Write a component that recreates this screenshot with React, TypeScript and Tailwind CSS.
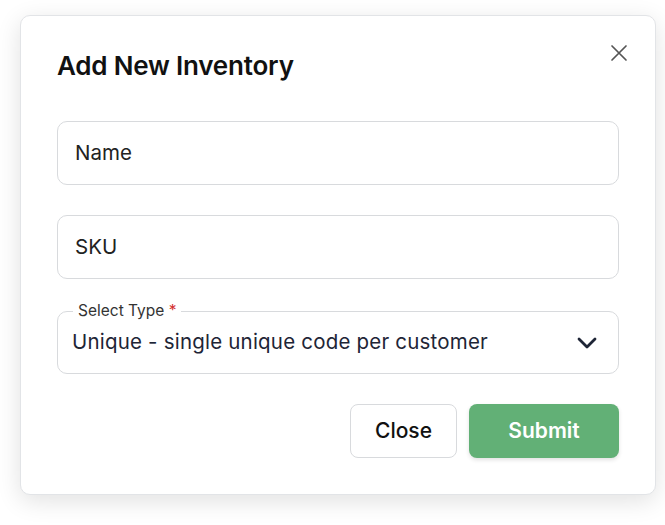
export default function App() {
  return (
    <div className="h-[525px] w-[665px] bg-white pl-5 pr-[10px] pt-[15px] font-['Inter',sans-serif]">
      {/* Modal card */}
      <div className="relative h-[480px] w-[636px] rounded-[10px] border border-[#e2e4e7] bg-white px-9 pt-[33px] shadow-[0_6px_24px_rgba(0,0,0,0.12)]">
        <button className="absolute right-[27px] top-[28px] text-[#555]">
          <svg width="18" height="18" viewBox="0 0 18 18" fill="none" stroke="currentColor" strokeWidth="1.7" strokeLinecap="round">
            <path d="M2 2L16 16M16 2L2 16" />
          </svg>
        </button>

        <h2 className="text-[26px] font-semibold leading-[34px] tracking-[-0.2px] text-[#111]">
          Add New Inventory
        </h2>

        <div className="mt-[38px] flex flex-col">
          <div className="flex h-[64px] items-center rounded-[10px] border border-[#d8dadd] px-[17px] text-[20.5px] text-[#222]">
            Name
          </div>
          <div className="mt-[30px] flex h-[64px] items-center rounded-[10px] border border-[#d8dadd] px-[17px] text-[20.5px] text-[#222]">
            SKU
          </div>

          {/* Select with floating label */}
          <div className="relative mt-[32px] flex h-[63px] items-center justify-between rounded-[10px] border border-[#d8dadd] pl-[14px] pr-[21px]">
            <span className="absolute left-[15px] top-[-11px] bg-white px-[5px] text-[15.5px] leading-[20px] text-[#333]">
              Select Type <span className="text-[#d32f2f]">*</span>
            </span>
            <span className="text-[20.5px] tracking-[0.2px] text-[#1e2536]">
              Unique - single unique code per customer
            </span>
            <svg width="20" height="12" viewBox="0 0 20 12" fill="none" stroke="#1e2536" strokeWidth="2.8" strokeLinecap="round" strokeLinejoin="round">
              <path d="M2 2L10 10L18 2" />
            </svg>
          </div>
        </div>

        <div className="mt-[30px] flex justify-end gap-3">
          <button className="h-[54px] w-[107px] rounded-[8px] border border-[#d8dadd] bg-white text-[21px] font-medium text-[#111]">
            Close
          </button>
          <button className="h-[54px] w-[150px] rounded-[8px] bg-[#62b076] text-[21px] font-semibold text-white shadow-[0_2px_4px_rgba(0,0,0,0.12)]">
            Submit
          </button>
        </div>
      </div>
    </div>
  );
}
